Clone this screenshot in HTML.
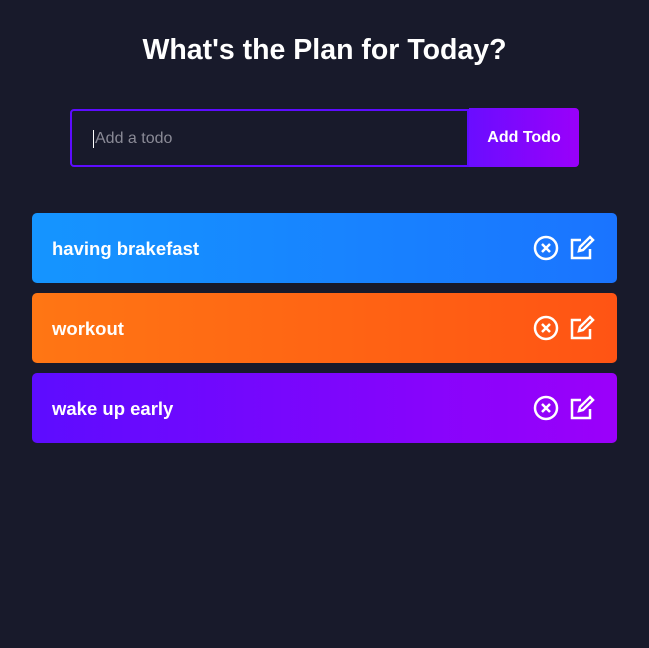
<!DOCTYPE html>
<html><head><style>
body{margin:0;background:#181a2b;width:649px;height:648px;font-family:"Liberation Sans",sans-serif;position:relative;overflow:hidden}
h1{position:absolute;top:34px;left:0;width:649px;text-align:center;margin:0;color:#fff;font-size:28.5px;font-weight:bold}
.inp{position:absolute;left:70px;top:109px;width:395px;height:54px;border:2px solid #5d0cff;border-radius:4px 0 0 4px}
.inp span{position:absolute;left:21px;top:19px;color:#8a8a96;font-size:16px;border-left:1px solid #fff;padding-left:1px;line-height:18px}
.btn{position:absolute;left:469px;top:108px;width:110px;height:59px;border-radius:0 4px 4px 0;background:linear-gradient(90deg,#6a0dff,#9a00fa);color:#fff;font-size:16px;font-weight:600;text-align:center;line-height:60px}
.row{position:absolute;left:32px;width:585px;height:70px;border-radius:5px;color:#fff;font-size:18.5px;font-weight:bold;line-height:72px;box-sizing:border-box;padding-left:20px}
.r1{top:213px;background:linear-gradient(90deg,#1595ff,#1a74ff)}
.r2{top:293px;background:linear-gradient(90deg,#ff7614,#ff5414)}
.r3{top:373px;background:linear-gradient(90deg,#5d0cff,#9b00fa)}
.row svg{position:absolute;top:22px}
</style></head><body>
<h1>What's the Plan for Today?</h1>
<div class="inp"><span>Add a todo</span></div>
<div class="btn">Add Todo</div>
<div class="row r1">having brakefast
<svg style="left:501px" width="26" height="26" viewBox="0 0 26 26" fill="none" stroke="#fff" stroke-width="2.5"><circle cx="13" cy="13" r="11"/><path d="M9 9l8 8M17 9l-8 8"/></svg>
<svg style="left:537px" width="26" height="26" viewBox="0 0 26 26" fill="none" stroke="#fff" stroke-width="2.5"><path d="M12 5H3v18h18v-9"/><path d="M10 16l1-4 10-10 3 3-10 10z"/></svg></div>
<div class="row r2">workout
<svg style="left:501px" width="26" height="26" viewBox="0 0 26 26" fill="none" stroke="#fff" stroke-width="2.5"><circle cx="13" cy="13" r="11"/><path d="M9 9l8 8M17 9l-8 8"/></svg>
<svg style="left:537px" width="26" height="26" viewBox="0 0 26 26" fill="none" stroke="#fff" stroke-width="2.5"><path d="M12 5H3v18h18v-9"/><path d="M10 16l1-4 10-10 3 3-10 10z"/></svg></div>
<div class="row r3">wake up early
<svg style="left:501px" width="26" height="26" viewBox="0 0 26 26" fill="none" stroke="#fff" stroke-width="2.5"><circle cx="13" cy="13" r="11"/><path d="M9 9l8 8M17 9l-8 8"/></svg>
<svg style="left:537px" width="26" height="26" viewBox="0 0 26 26" fill="none" stroke="#fff" stroke-width="2.5"><path d="M12 5H3v18h18v-9"/><path d="M10 16l1-4 10-10 3 3-10 10z"/></svg></div>
</body></html>
